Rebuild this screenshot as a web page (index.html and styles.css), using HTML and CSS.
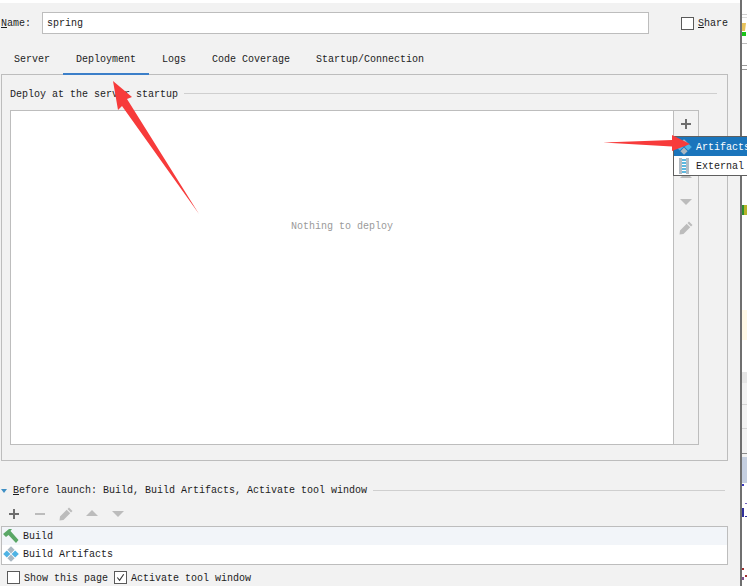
FILE: index.html
```html
<!DOCTYPE html>
<html lang="en">
<head>
<meta charset="utf-8">
<title>Run configuration</title>
<link rel="stylesheet" href="styles.css">
</head>
<body>
<svg class="defs" width="0" height="0" aria-hidden="true">
  <symbol id="i-plus" viewBox="0 0 16 16"><path d="M7 3h2v4h4v2H9v4H7V9H3V7h4z"/></symbol>
  <symbol id="i-minus" viewBox="0 0 16 16"><path d="M3 7h10v2H3z"/></symbol>
  <symbol id="i-up" viewBox="0 0 16 16"><path d="M8 4l6 6H2z"/></symbol>
  <symbol id="i-down" viewBox="0 0 16 16"><path d="M2 5h12l-6 6z"/></symbol>
  <symbol id="i-edit" viewBox="0 0 16 16"><path d="M11 1.500l3.500 3.500-1.500 1.500-3.500-3.500zM8.700 3.800l3.500 3.500-6.700 6.700-4 .5.500-4z"/></symbol>
  <symbol id="i-artifact" viewBox="0 0 16 16">
    <path class="d-gray" d="M8 .2l3.600 3.600L8 7.400 4.400 3.800z"/><path class="d-gray" d="M8 8.600l3.600 3.600L8 15.800l-3.600-3.600z"/>
    <path class="d-blue" d="M3.800 4.400L7.400 8l-3.600 3.600L.2 8z"/><path class="d-blue" d="M12.200 4.400L15.800 8l-3.600 3.600L8.600 8z"/>
  </symbol>
</svg>

<div class="window">
  <main class="dialog">
    <div class="name-row">
      <label class="name-label"><u>N</u>ame:</label>
      <div class="name-input">spring</div>
      <span class="box share-box"></span>
      <span class="share-label"><u>S</u>hare</span>
    </div>

    <nav class="tabs">
      <span class="tab">Server</span>
      <span class="tab tab-active">Deployment</span>
      <span class="tab">Logs</span>
      <span class="tab">Code Coverage</span>
      <span class="tab">Startup/Connection</span>
    </nav>

    <section class="panel">
      <div class="group-title"><span>Deploy at the server startup</span><i class="rule"></i></div>
      <div class="deploy-box">
        <div class="deploy-list">Nothing to deploy</div>
        <div class="side-tools">
          <svg class="tool dark"><use href="#i-plus"/></svg>
          <svg class="tool"><use href="#i-minus"/></svg>
          <svg class="tool"><use href="#i-up"/></svg>
          <svg class="tool"><use href="#i-down"/></svg>
          <svg class="tool"><use href="#i-edit"/></svg>
        </div>
      </div>
    </section>

    <div class="before-title">
      <i class="caret"></i>
      <span><u>B</u>efore launch: Build, Build Artifacts, Activate tool window</span>
      <i class="rule"></i>
    </div>

    <div class="before-tools">
      <svg class="tool dark"><use href="#i-plus"/></svg>
      <svg class="tool"><use href="#i-minus"/></svg>
      <svg class="tool"><use href="#i-edit"/></svg>
      <svg class="tool"><use href="#i-up"/></svg>
      <svg class="tool"><use href="#i-down"/></svg>
    </div>

    <div class="before-list">
      <div class="before-row odd">
        <svg class="row-icon" viewBox="0 0 16 16"><path class="hammer" d="M0 6L6 1h3L7.500 3l8 9-2.500 3-7.500-8L3 9z"/></svg>
        <span>Build</span>
      </div>
      <div class="before-row">
        <svg class="row-icon"><use href="#i-artifact"/></svg>
        <span>Build Artifacts</span>
      </div>
    </div>

    <div class="options">
      <span class="box"></span><span class="opt-show">Show this page</span>
      <span class="box"><svg viewBox="0 0 12 12"><path class="check" d="M2.500 6l2.500 3 4.500-6.500"/></svg></span><span>Activate tool window</span>
    </div>
  </main>

  <aside class="behind">
    <svg width="5" height="586" viewBox="0 0 5 586">
      <rect y="14" width="5" height="1" fill="#cfcfcf"/>
      <rect y="17" width="5" height="1" fill="#dcdcdc"/>
      <path d="M0 23h4l-1 8H0z" fill="#e8c25a"/>
      <rect x="0" y="32" width="4" height="4" fill="#19c419"/>
      <rect y="43" width="5" height="1" fill="#bdbdbd"/>
      <rect y="65" width="5" height="1" fill="#9a9a9a"/>
      <rect y="69" width="5" height="1" fill="#9a9a9a"/>
      <rect x="0" y="205" width="2" height="10" fill="#2f8f2f"/>
      <rect x="2" y="205" width="3" height="10" fill="#b5b52a"/>
      <rect y="310" width="5" height="30" fill="#fff8e6"/>
      <rect y="372" width="5" height="11" fill="#e6e6e6"/>
      <rect y="383" width="5" height="75" fill="#f2f2f2"/>
      <rect y="404" width="5" height="1" fill="#d4d4d4"/>
      <rect y="428" width="5" height="1" fill="#d4d4d4"/>
      <rect y="453" width="5" height="1" fill="#8a8a8a"/>
      <rect y="457" width="5" height="26" fill="#c5cfe0"/>
      <rect x="0" y="484" width="2" height="2" fill="#3a3ac0"/>
      <rect x="3" y="503" width="2" height="1" fill="#7060c0"/>
      <rect x="0" y="508" width="2" height="9" fill="#30309a"/>
      <rect x="3" y="516" width="2" height="1" fill="#30309a"/>
      <rect x="0" y="568" width="2" height="2" fill="#a03030"/>
      <rect x="3" y="575" width="2" height="2" fill="#a03030"/>
      <rect x="0" y="577" width="2" height="3" fill="#805090"/>
    </svg>
  </aside>
</div>

<div class="popup">
  <div class="popup-item selected">
    <svg class="row-icon"><use href="#i-artifact"/></svg>
    <span>Artifacts</span>
  </div>
  <div class="popup-item">
    <svg class="row-icon" viewBox="0 0 16 16">
      <rect x="3" y="0" width="10" height="16" fill="#b3bcc4"/>
      <rect x="6" y="0" width="4" height="16" fill="#fff"/>
      <path class="zip" d="M6 1h4v2H6zM6 4h4v2H6zM6 7h4v2H6zM6 10h4v2H6zM6 13h4v2H6z"/>
    </svg>
    <span>External</span>
  </div>
</div>

<svg class="arrows" width="747" height="586" viewBox="0 0 747 586" aria-hidden="true">
  <path class="arrow" d="M113 81L132 97 127 99 199 214 122 106 118 110z"/>
  <path class="arrow" d="M603 142.500L672 140 672 135 690 144 672 151 672 146.500z"/>
</svg>
</body>
</html>
```

FILE: styles.css
```css
* { box-sizing: border-box; }

html, body {
  margin: 0;
  width: 747px;
  height: 586px;
  overflow: hidden;
  background: #fff;
}

body {
  position: relative;
  font-family: "Liberation Mono", monospace;
  font-size: 10px;
  line-height: 12px;
  color: #1c1c1c;
}

.defs { position: absolute; }

.window {
  display: flex;
  height: 586px;
}

.dialog {
  width: 740px;
  flex: none;
  display: flex;
  flex-direction: column;
  margin-top: 3px;
  background: #f2f2f2;
}

.behind {
  flex: none;
  width: 7px;
  border-left: 2px solid #6f6f6f;
  background: #fff;
}

.behind svg { display: block; }

/* name row */
.name-row {
  display: flex;
  align-items: center;
  height: 22px;
  margin-top: 9px;
  padding-left: 1px;
}

.name-label { width: 41px; padding-top: 2px; }

.name-input {
  width: 607px;
  height: 22px;
  padding: 1px 4px 0;
  line-height: 20px;
  background: #fff;
  border: 1px solid #bdbdbd;
}

.box {
  flex: none;
  width: 13px;
  height: 13px;
  background: #fff;
  border: 1px solid #5a5a5a;
  display: block;
}

.box svg { display: block; width: 11px; height: 11px; }

.check { fill: none; stroke: #333; stroke-width: 1.200; }

.share-box { margin-left: 32px; }
.share-label { margin-left: 4px; padding-top: 2px; }

/* tabs */
.tabs {
  display: flex;
  height: 25px;
  margin-top: 16px;
  padding-left: 1px;
  position: relative;
  z-index: 1;
}

.tab {
  padding: 3px 13px 0;
  line-height: 14px;
  height: 25px;
}

.tab-active { border-bottom: 2px solid #3b7fc9; }

/* panel */
.panel {
  width: 727px;
  height: 387px;
  margin: -1px 0 0 1px;
  padding: 13px 0 0 8px;
  border: 1px solid #bdbdbd;
}

.group-title {
  display: flex;
  align-items: center;
  gap: 6px;
  height: 11px;
  padding-right: 10px;
}

.group-title span { padding-top: 3px; }

.rule {
  flex: 1;
  height: 1px;
  background: #cfcfcf;
}

.deploy-box {
  display: flex;
  width: 689px;
  height: 335px;
  margin-top: 11px;
  border: 1px solid #bdbdbd;
}

.deploy-list {
  flex: 1;
  padding-top: 110px;
  text-align: center;
  color: #9a9a9a;
  background: #fff;
  border-right: 1px solid #bdbdbd;
}

.side-tools {
  width: 24px;
  padding-top: 5px;
  display: flex;
  flex-direction: column;
  align-items: center;
  gap: 10px;
}

.tool {
  display: block;
  width: 16px;
  height: 16px;
  flex: none;
  fill: #bcbcbc;
}

.tool.dark { fill: #6e6e6e; }

/* before launch */
.before-title {
  display: flex;
  align-items: center;
  height: 13px;
  margin-top: 23px;
  padding: 0 15px 0 1px;
}

.before-title span { padding-top: 1px; }

.caret {
  width: 0;
  height: 0;
  margin-right: 6px;
  border-left: 3px solid transparent;
  border-right: 3px solid transparent;
  border-top: 4px solid #3f8fc4;
}

.before-title .rule { margin-left: 6px; }

.before-tools {
  display: flex;
  gap: 10px;
  height: 16px;
  margin-top: 9px;
  padding-left: 6px;
}

.before-list {
  width: 727px;
  height: 39px;
  margin: 4px 0 0 1px;
  background: #fff;
  border: 1px solid #bdbdbd;
}

.before-row {
  display: flex;
  align-items: center;
  gap: 4px;
  height: 18px;
  padding-left: 1px;
}

.before-row span { padding-top: 2px; }

.before-row.odd { background: #f2f5f9; }

.row-icon {
  display: block;
  width: 16px;
  height: 16px;
  flex: none;
}

.hammer { fill: #5aa766; }
.d-blue { fill: #4fb3e4; }
.d-gray { fill: #a9b7c2; }
.zip { fill: #5db8e0; }

.options {
  display: flex;
  align-items: center;
  height: 13px;
  margin-top: 6px;
  padding-left: 7px;
}

.options span:not(.box) { padding-top: 2px; }
.options .box + span { margin-left: 4px; }
.opt-show { margin-right: 6px; }

/* popup over the toolbar */
.popup {
  position: absolute;
  left: 673px;
  top: 136px;
  width: 74px;
  height: 40px;
  overflow: hidden;
  background: #fff;
  border: 1px solid #5f5f5f;
  border-right: 0;
}

.popup-item {
  display: flex;
  align-items: center;
  gap: 4px;
  height: 19px;
  padding-left: 2px;
  white-space: nowrap;
}

.popup-item span { padding-top: 2px; }

.popup-item.selected {
  background: #1a75bc;
  color: #fff;
}

/* annotation arrows */
.arrows {
  position: absolute;
  left: 0;
  top: 0;
  pointer-events: none;
}

.arrow { fill: #f73b3b; }
```
